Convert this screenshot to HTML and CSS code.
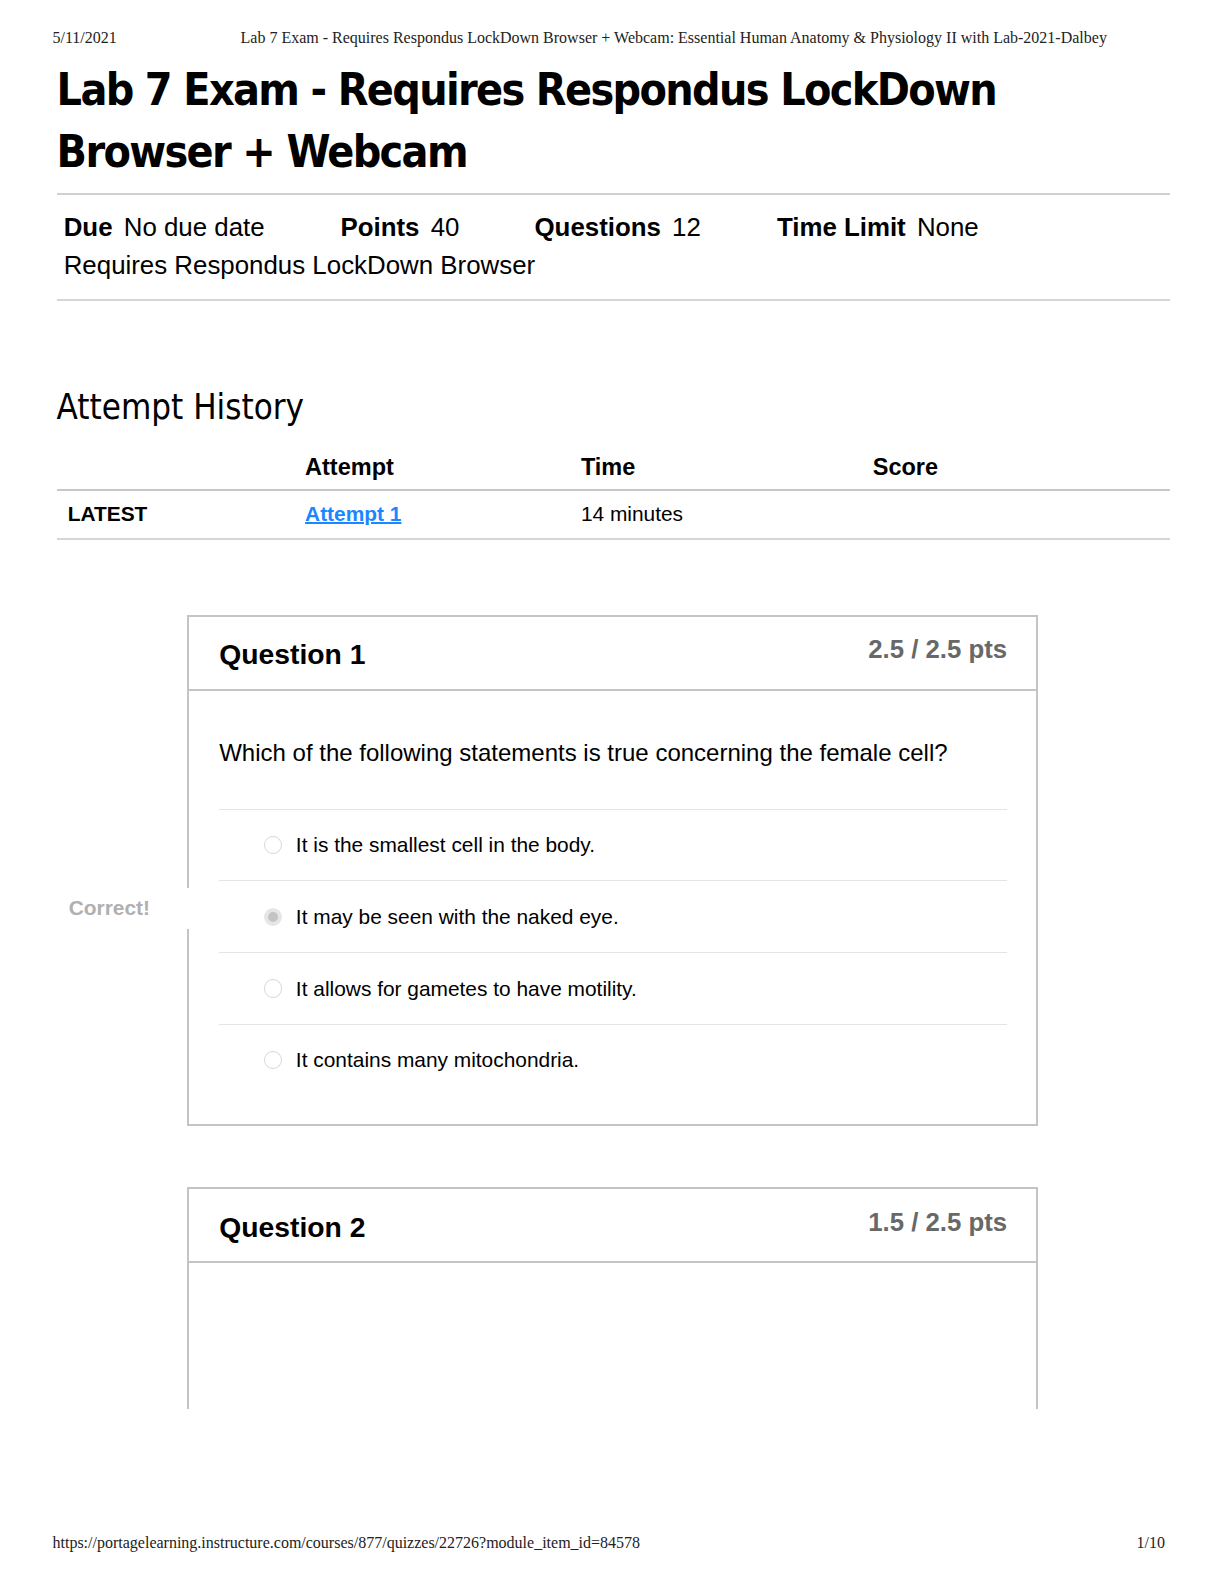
FILE: index.html
```html
<!DOCTYPE html>
<html lang="en">
<head>
<meta charset="utf-8">
<title>Lab 7 Exam</title>
<link rel="stylesheet" href="styles.css">
</head>
<body>
<div class="page">
  <div class="print-head">
    <span class="ph-date">5/11/2021</span>
    <span class="ph-title">Lab 7 Exam - Requires Respondus LockDown Browser + Webcam: Essential Human Anatomy &amp; Physiology II with Lab-2021-Dalbey</span>
  </div>

  <main class="content">
    <div class="title-wrap">
      <h1 class="title">Lab 7 Exam - Requires Respondus LockDown Browser + Webcam</h1>
    </div>

    <div class="details">
      <div class="details-row">
        <span class="d-item d-due"><b>Due</b> No due date</span>
        <span class="d-item d-points"><b>Points</b> 40</span>
        <span class="d-item d-questions"><b>Questions</b> 12</span>
        <span class="d-item d-limit"><b>Time Limit</b> None</span>
      </div>
      <div class="details-row">Requires Respondus LockDown Browser</div>
    </div>

    <h2 class="history-title">Attempt History</h2>
    <table class="history">
      <thead>
        <tr><th class="c1"></th><th class="c2">Attempt</th><th class="c3">Time</th><th class="c4">Score</th></tr>
      </thead>
      <tbody>
        <tr><td class="c1 latest">LATEST</td><td class="c2"><a href="#" class="attempt-link">Attempt 1</a></td><td class="c3">14 minutes</td><td class="c4"></td></tr>
      </tbody>
    </table>

    <section class="question q1">
      <div class="q-head">
        <h3 class="q-name">Question 1</h3>
        <span class="q-pts">2.5 / 2.5 pts</span>
      </div>
      <div class="q-body">
        <p class="q-text">Which of the following statements is true concerning the female cell?</p>
        <div class="answers">
          <div class="answer"><span class="radio"></span><span class="a-text">It is the smallest cell in the body.</span></div>
          <div class="answer correct"><span class="correct-label">Correct!</span><span class="radio checked"></span><span class="a-text">It may be seen with the naked eye.</span></div>
          <div class="answer"><span class="radio"></span><span class="a-text">It allows for gametes to have motility.</span></div>
          <div class="answer"><span class="radio"></span><span class="a-text">It contains many mitochondria.</span></div>
        </div>
      </div>
    </section>

    <section class="question q2">
      <div class="q-head">
        <h3 class="q-name">Question 2</h3>
        <span class="q-pts">1.5 / 2.5 pts</span>
      </div>
      <div class="q-body q-body-cut"></div>
    </section>
  </main>

  <div class="print-foot">
    <span>https://portagelearning.instructure.com/courses/877/quizzes/22726?module_item_id=84578</span>
    <span>1/10</span>
  </div>
</div>
</body>
</html>
```

FILE: styles.css
```css
html, body {
  margin: 0;
  padding: 0;
  background: #fff;
}

html {
  overflow: hidden;
}

.page {
  height: 100vh;
  overflow: hidden;
  box-sizing: border-box;
  display: flex;
  flex-direction: column;
  font-family: "Liberation Sans", Arial, sans-serif;
  color: #000;
}

.print-head {
  display: flex;
  padding: 29.3px 0 0 52.5px;
  height: 18.2px;
  font-family: "Liberation Serif", "Times New Roman", serif;
  font-size: 16px;
  line-height: 18.2px;
  color: #222;
  white-space: nowrap;
}

.ph-date {
  width: 188px;
}

.content {
  padding: 0 54px 0 56.6px;
}

.title-wrap {
  margin-top: 11.1px;
  padding-bottom: 9.2px;
  border-bottom: 2px solid #d0d0d0;
}

.title {
  margin: 0;
  max-width: 1010px;
  font-family: "DejaVu Sans Condensed", "DejaVu Sans", Verdana, sans-serif;
  font-stretch: condensed;
  font-weight: bold;
  font-size: 44.4px;
  line-height: 62.6px;
  letter-spacing: -1.65px;
}

.details {
  padding: 13px 0 14px 7.1px;
  border-bottom: 2px solid #d6d6d6;
  font-size: 25.86px;
  line-height: 38.4px;
}

.details-row {
  display: flex;
}

.d-item b {
  margin-right: 4px;
}

.d-due { width: 276.8px; }
.d-points { width: 194px; }
.d-questions { width: 242.4px; }

.history-title {
  margin: 83.9px 0 0;
  font-family: "DejaVu Sans Condensed", "DejaVu Sans", Verdana, sans-serif;
  font-stretch: condensed;
  font-weight: normal;
  font-size: 34.65px;
  line-height: 44.4px;
}

.history {
  margin-top: 20.2px;
  width: 100%;
  border-collapse: collapse;
  font-size: 20.9px;
}

.history th {
  text-align: left;
  font-weight: bold;
  font-size: 23.5px;
  line-height: 28.3px;
  padding: 4px 0 7.1px;
  vertical-align: middle;
  border-bottom: 2px solid #c8c8c8;
}

.history td {
  height: 47.5px;
  padding: 0;
  border-bottom: 2px solid #d6d6d6;
  vertical-align: middle;
}

.history .c1 { width: 237.4px; padding-left: 11.1px; }
.history .c2 { width: 275.8px; }
.history .c3 { width: 291.9px; }

.latest {
  font-weight: bold;
}

.attempt-link {
  color: #1a86ff;
  font-weight: bold;
  text-decoration: underline;
  text-decoration-thickness: 2px;
}

.question {
  margin-left: 130.3px;
  width: 847.5px;
  border: 2px solid #c4c4c4;
}

.q1 {
  margin-top: 74.7px;
}

.q2 {
  margin-top: 61.6px;
  border-bottom: none;
}

.q-head {
  display: flex;
  justify-content: space-between;
  align-items: flex-start;
  padding: 16.2px 29.3px 0 30.3px;
  height: 55.8px;
  border-bottom: 2px solid #c4c4c4;
}

.q-name {
  margin: 3px 0 0;
  font-size: 28.3px;
  line-height: 36.4px;
  font-weight: bold;
}

.q-pts {
  font-size: 25.75px;
  line-height: 32.3px;
  font-weight: bold;
  color: #686868;
}

.q-body {
  padding: 48.3px 29.3px 28.3px 30.3px;
}

.q-body-cut {
  height: 68.7px;
}

.q-text {
  margin: 0 0 41.4px;
  font-size: 24px;
  line-height: 28.3px;
}

.answer {
  position: relative;
  display: flex;
  align-items: center;
  height: 70.7px;
  border-top: 1px solid #e4e4e4;
  font-size: 20.9px;
}

.radio {
  width: 18.2px;
  height: 18.2px;
  margin: 0 14.1px 0 44.4px;
  border: 1px solid #d8d8d8;
  border-radius: 50%;
  box-sizing: border-box;
  background: #fff;
}

.radio.checked {
  border: 4px solid #e6e6e6;
  background: #c4c4c4;
}

.correct-label {
  position: absolute;
  left: -150.5px;
  top: 7px;
  width: 126px;
  height: 40.4px;
  line-height: 40.4px;
  background: #fff;
  color: #b0b0b0;
  font-weight: bold;
  font-size: 20.9px;
}

.print-foot {
  margin-top: auto;
  display: flex;
  justify-content: space-between;
  padding: 0 59px 31.5px 52.5px;
  font-family: "Liberation Serif", "Times New Roman", serif;
  font-size: 16px;
  line-height: 18.2px;
  color: #222;
}
```
